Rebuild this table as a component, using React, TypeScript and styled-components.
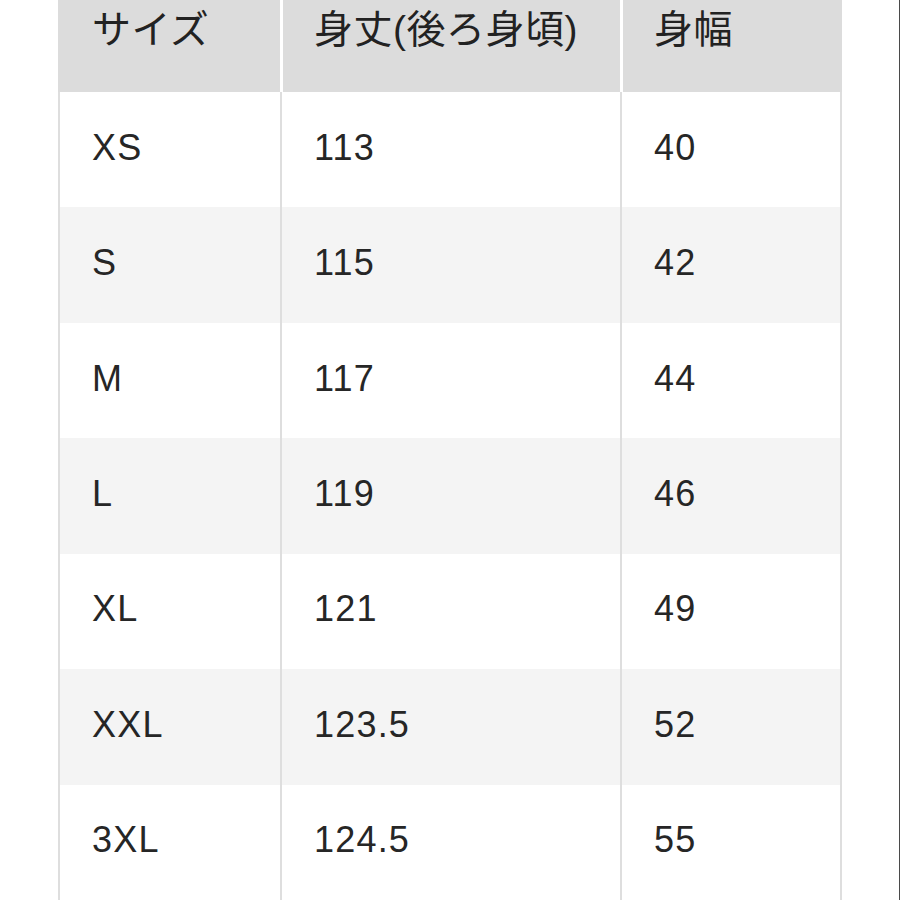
import React from "react";
import styled, { createGlobalStyle } from "styled-components";

const Global = createGlobalStyle`
  html, body { margin: 0; padding: 0; background: #ffffff; }
  body { font-family: "Liberation Sans", "Noto Sans CJK JP", sans-serif; }
`;

const Page = styled.div`
  width: 900px;
  height: 900px;
  box-sizing: border-box;
  border-right: 1px solid #4a4a4a;
  padding-left: 58px;
  overflow: hidden;
  background: #fff;
`;

const Table = styled.div`
  display: grid;
  grid-template-columns: 222px 340px 222px;
  grid-template-rows: 92px repeat(7, 115.43px);
  width: 784px;
`;

const HeadCell = styled.div<{ $first?: boolean }>`
  background: #dcdcdc;
  box-sizing: border-box;
  border-left: ${(p) => (p.$first ? "none" : "3px solid #ffffff")};
  padding: 8px 0 0 ${(p) => (p.$first ? "34px" : "31px")};
  font-family: "Liberation Sans", "Noto Sans CJK JP", sans-serif;
  font-size: 39px;
  line-height: 44px;
  letter-spacing: 0.5px;
  color: #222222;
  white-space: nowrap;
`;

const Cell = styled.div<{ $alt: boolean; $last?: boolean }>`
  background: ${(p) => (p.$alt ? "#f4f4f4" : "#ffffff")};
  box-sizing: border-box;
  border-left: 2px solid #dedede;
  border-right: ${(p) => (p.$last ? "2px solid #dedede" : "none")};
  display: flex;
  align-items: center;
  padding: 0 0 4px 32px;
  font-family: "Liberation Sans", sans-serif;
  font-size: 36px;
  letter-spacing: 1.2px;
  color: #262626;
`;

const rows: [string, string, string][] = [
  ["XS", "113", "40"],
  ["S", "115", "42"],
  ["M", "117", "44"],
  ["L", "119", "46"],
  ["XL", "121", "49"],
  ["XXL", "123.5", "52"],
  ["3XL", "124.5", "55"],
];

export default function App() {
  return (
    <>
      <Global />
      <Page>
        <Table>
          <HeadCell $first>サイズ</HeadCell>
          <HeadCell>身丈(後ろ身頃)</HeadCell>
          <HeadCell>身幅</HeadCell>
          {rows.map((r, i) =>
            r.map((v, j) => (
              <Cell key={`${i}-${j}`} $alt={i % 2 === 1} $last={j === 2}>
                {v}
              </Cell>
            ))
          )}
        </Table>
      </Page>
    </>
  );
}
